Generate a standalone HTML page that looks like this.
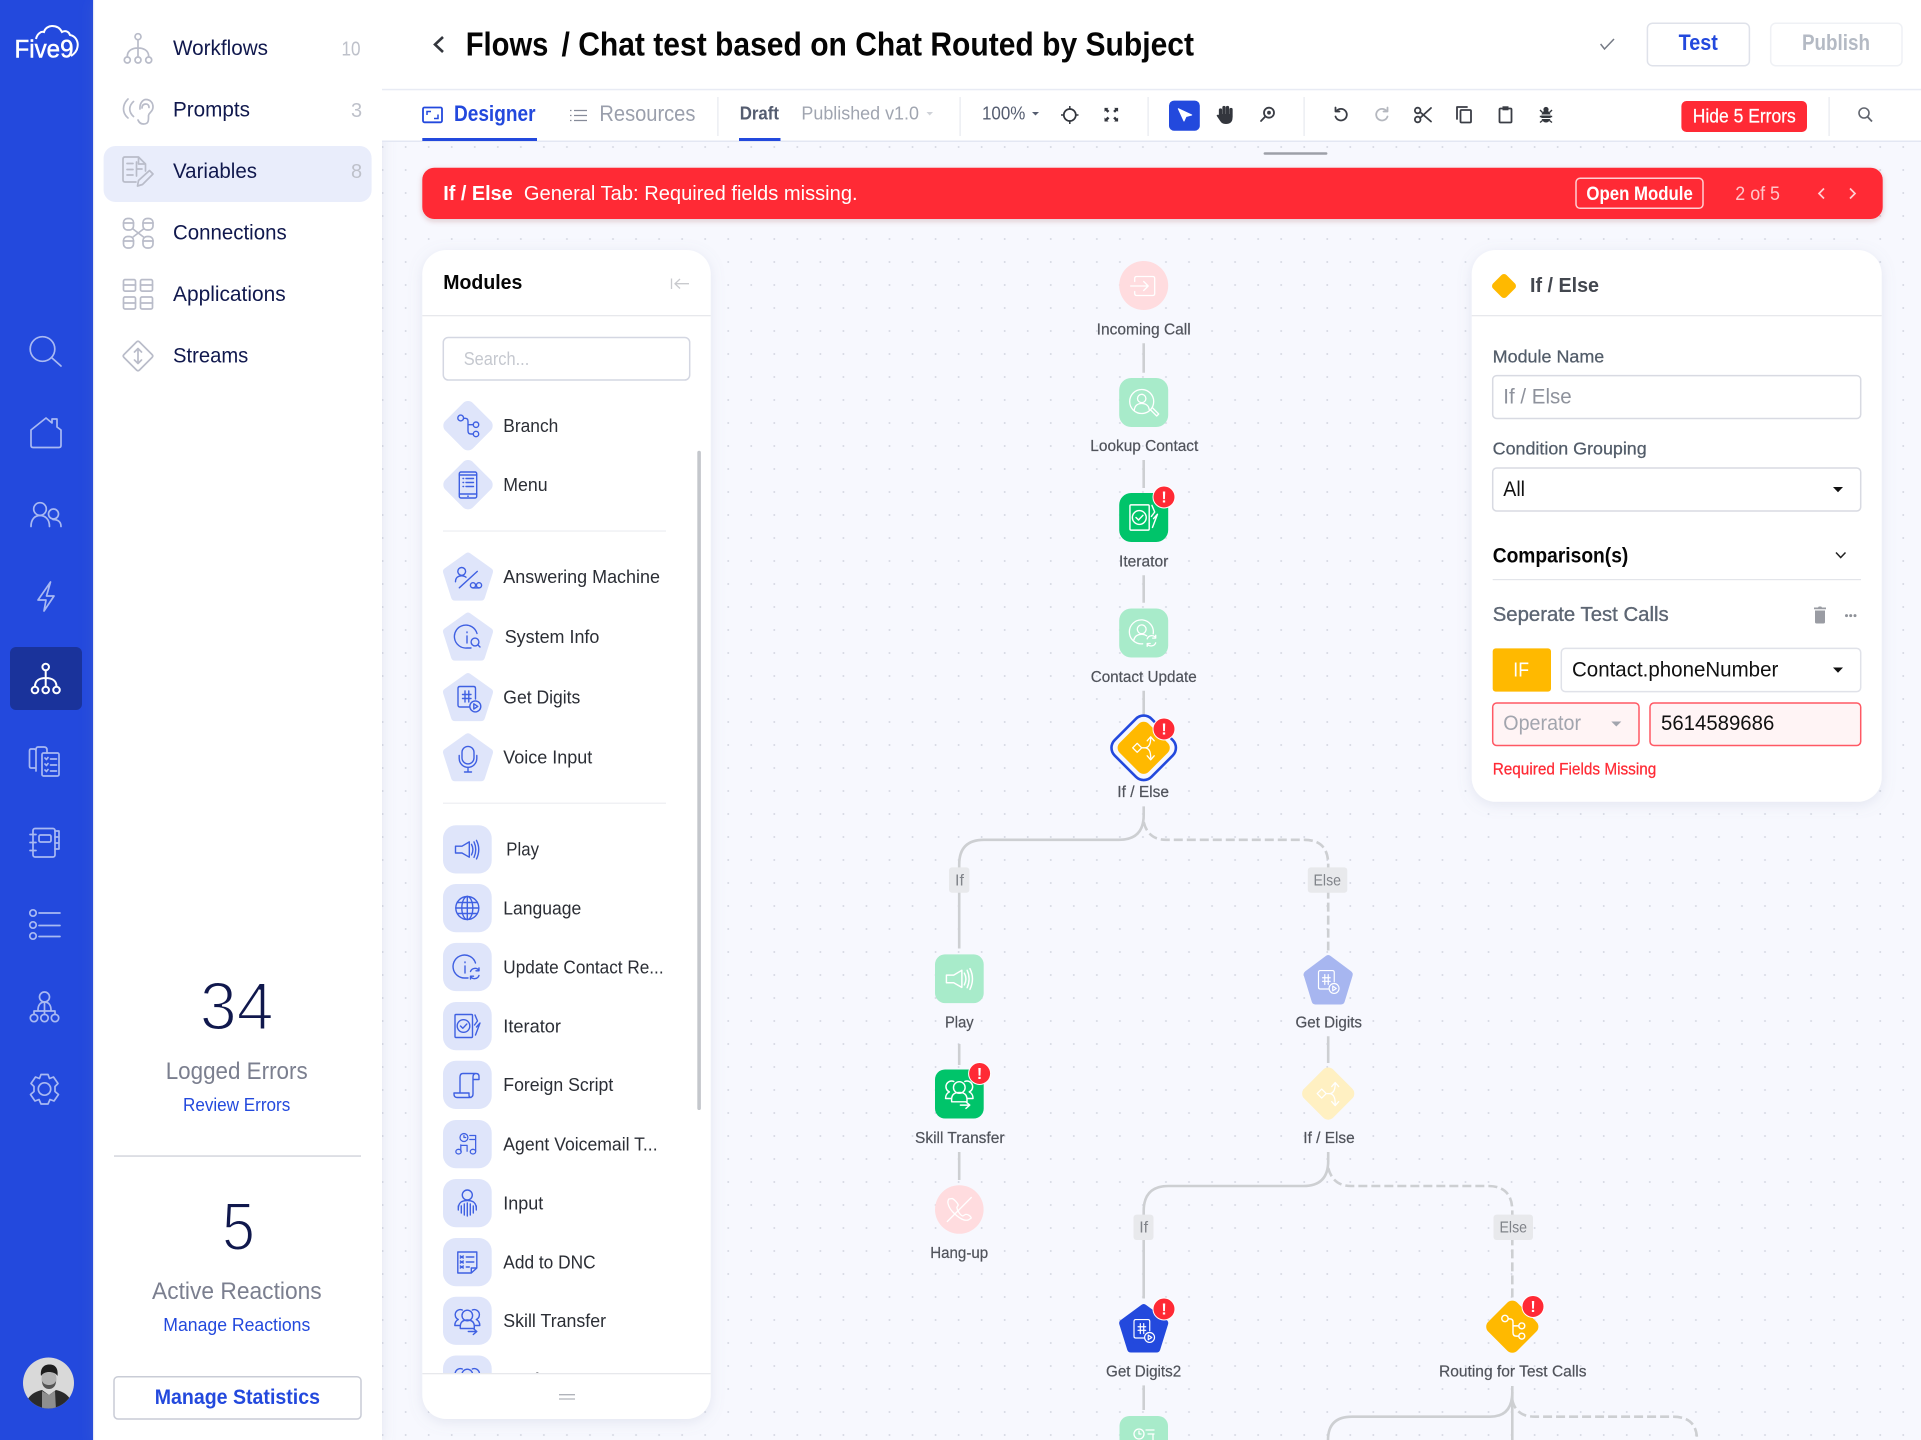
<!DOCTYPE html>
<html lang="en"><head><meta charset="utf-8"><title>Flows / Chat test based on Chat Routed by Subject</title>
<style>
html,body{margin:0;padding:0;background:#fff;width:1921px;height:1440px;overflow:hidden}
svg{display:block}
text{font-family:"Liberation Sans",Arial,sans-serif;white-space:pre}
.b{font-weight:700}
.side{font-size:21px;fill:#10184d}
.cnt{font-size:20px;fill:#bec1ca}
.mod{font-size:18.5px;fill:#2b2e35}
.nl{font-size:15.5px;fill:#50535b;stroke:#50535b;stroke-width:.2px}
.lb{font-size:17.5px;fill:#525c69;stroke:#525c69;stroke-width:.25px}
.tag{font-size:16px;fill:#808389}
.ic{fill:none;stroke:#3f60e2;stroke-width:1.4;stroke-linecap:round;stroke-linejoin:round}
.nw{fill:none;stroke:#fff;stroke-width:1.3;stroke-linecap:round;stroke-linejoin:round}
.rl{fill:none;stroke:#a9b9f2;stroke-width:1.7;stroke-linecap:round;stroke-linejoin:round}
.gy{fill:none;stroke:#b9bcc9;stroke-width:1.7;stroke-linecap:round;stroke-linejoin:round}
.tb{fill:none;stroke:#3a3d45;stroke-width:1.8;stroke-linecap:round;stroke-linejoin:round}
.ln{fill:none;stroke:#cdcfd2;stroke-width:2.6}
.ds{fill:none;stroke:#cdcfd2;stroke-width:2.6;stroke-dasharray:9 4}
.ex{font-size:16px;font-weight:700;fill:#fff;text-anchor:middle}
</style></head><body>
<svg xmlns="http://www.w3.org/2000/svg" width="1921" height="1440" viewBox="0 0 1921 1440">
<defs>
<pattern id="dots" x="371.1" y="135.5" width="23.04" height="23" patternUnits="userSpaceOnUse"><circle cx="11.52" cy="11.5" r="1" fill="#d6d9e3"/></pattern>
<filter id="sh" x="-10%" y="-10%" width="120%" height="120%"><feDropShadow dx="0" dy="3" stdDeviation="7" flood-color="#7f88ad" flood-opacity=".17"/></filter>
<filter id="sh2" x="-5%" y="-30%" width="110%" height="170%"><feDropShadow dx="0" dy="2" stdDeviation="3" flood-color="#7f1f2a" flood-opacity=".22"/></filter>
<clipPath id="listclip"><rect x="422" y="316" width="289" height="1057.5"/></clipPath>
<clipPath id="av"><circle cx="48.5" cy="1383" r="25.5"/></clipPath>
<g id="pent"><polygon points="0,-20 21,-5 13,20 -13,20 -21,-5" stroke-width="8" stroke-linejoin="round"/></g>
<g id="xp"><path d="M-6.800 -6.800H-2.800L-3.900 -5.700L-1.900 -3.700L-3.700 -1.900L-5.700 -3.900L-6.800 -2.800Z"/></g>
<g id="i-branch"><circle cx="-7.3" cy="-7.7" r="2.9"/><circle cx="8" cy="-1" r="2.7"/><circle cx="8" cy="8.3" r="2.7"/><path d="M-4.4 -7.4H-2.5Q0 -7.2 0 -4.5V5Q0 8.3 3 8.3H5.3M0 -1H5.3"/></g>
<g id="i-menu"><rect x="-8.7" y="-13" width="17.4" height="26" rx="1.6"/><path d="M-8.7 -10H8.7M-8.7 9H8.7M-2 -6.5H5.5M-2 -2.5H5.5M-2 1.5H5.5M-5 -6.5H-4.4M-5 -2.5H-4.4M-5 1.5H-4.4M-.3 11.2H.3"/></g>
<g id="i-am"><circle cx="-6.3" cy="-5.4" r="3.9"/><path d="M-12.5 5C-12.5 1-10 -1-6.5 -1C-4.5 -1-3 -.5-2 .5M-8.7 11L9.3 -5.4"/><circle cx="5" cy="8.5" r="2.6"/><circle cx="11" cy="8.5" r="2.6"/><path d="M5 11.1H11"/></g>
<g id="i-sys"><path d="M9 -3.5A11.5 11.5 0 1 0 -1 11H3M-1 -5V-4.3M-1 -1V6"/><circle cx="7" cy="5" r="3.9"/><path d="M10 8L12 10"/></g>
<g id="i-dig"><path d="M7.5 2V-8.5Q7.5 -10.5 5.5 -10.5H-8Q-10 -10.5 -10 -8.5V8Q-10 10 -8 10H1"/><path d="M-5.5 -2.5H3M-5.5 1.5H3M-3 -6V5M.8 -6V5"/><circle cx="7.3" cy="9.4" r="5.5"/><path d="M5.8 6.8L9.8 9.4L5.8 12Z"/></g>
<g id="i-mic"><rect x="-6" y="-10.6" width="12" height="17.5" rx="6"/><path d="M-8.8 -1.5V1.5A8.8 8.8 0 0 0 8.8 1.5V-1.5M0 10.5V15M-3.5 15H3.5"/></g>
<g id="i-play"><path d="M-11.5 -3.2H-5L2.3 -7.5V7.8L-5 3.6H-11.5Z"/><path d="M4.5 -5Q7.3 0 4.5 5.5M7 -7.5Q10.5 0 7 8M9.5 -9Q14 0 9.5 9.5"/></g>
<g id="i-globe"><circle r="11.5"/><ellipse rx="5.5" ry="11.5"/><path d="M0 -11.5V11.5M-11.5 0H11.5M-10 -5.5H10M-10 5.5H10"/></g>
<g id="i-upd"><path d="M8.5 -4A11.5 11.5 0 1 0 -2 11H1M-2 -5V-4.3M-2 -1V6"/><path d="M3.5 4.5A4.8 4.8 0 0 1 12 3.5M12 1V3.8H9M12 8.5A4.8 4.8 0 0 1 3.5 9.5M3.5 12V9.2H6.5"/></g>
<g id="i-iter"><rect x="-12.5" y="-11.5" width="17.5" height="23" rx="1"/><circle cx="-4" cy="0" r="6.3"/><path d="M-7 0L-4.7 2.3L-.7 -2M7.5 -11L10 -5L7 -1M9 1L12.5 -3L8 9"/></g>
<g id="i-script"><path d="M-7 8V-8Q-7 -11.5 -4 -11.5H9M9 -11.5Q6 -11.5 6 -8V9Q6 12.5 2.5 12.5H-10Q-13 12.5 -13 9V8H2V10Q2 12.5 4 12.5M9 -11.5Q12 -11.5 12 -8.5V-5.5H6"/></g>
<g id="i-agent"><circle cx="-4.500" cy="-7.200" r="4.400"/><path d="M-4.500 -9.500V-7.200H-2.500M-8 8V1M8.500 8V-9.500H2M2 -5H8.500M-1 8V1.500H-8"/><ellipse cx="-10.500" cy="8.500" rx="3" ry="2.600"/><ellipse cx="5.500" cy="8.500" rx="3" ry="2.600"/></g>
<g id="i-input"><circle cy="-8" r="5"/><path d="M-9 6C-9 -1-5 -2.5 0 -2.5S9 -1 9 6M-9 3V7M-6 3V10M-3 1V12M0 0V13M3 1V12M6 3V10M9 3V7"/></g>
<g id="i-dnc"><path d="M-9.5 -10H9.5V6L4 11H-9.5ZM9.5 6H4V11"/><path d="M-7 -6L-4 -4M-4 -6L-7 -4M-7 -1L-4 1M-4 -1L-7 1M-7 4L-4 6M-4 4L-7 6M-1 -5H6.5M-1 0H6.5M-1 5H2"/></g>
<g id="i-skill"><circle cy="-5" r="5.3"/><path d="M-7 6C-7 1-4 -.5 0 -.5S7 1 7 6V8H-7ZM-5 -10.5A4.6 4.6 0 0 0 -9 -1C-11 0-12.5 2-12.5 5H-7M5 -10.5A4.6 4.6 0 0 1 9 -1C11 0 12.5 2 12.5 5H7M1 11H9M6 8L9.5 11L6 14"/></g>
<g id="i-ifelse"><path d="M-11 0L-6.5 -4.5L-2 0L-6.5 4.5ZM-2 0H1Q7 0 7 -10M1 0Q7 0 7 10M3.5 -7L7 -11L10.5 -7M3.5 8L7 12L10.5 8"/></g>
<g id="i-enter"><path d="M-9 -4V-7Q-9 -9 -7 -9H9Q11 -9 11 -7V8Q11 10 9 10H-7Q-9 10 -9 8V6M-13 .5H4M0 -4L4.5 .5L0 5"/></g>
<g id="i-look"><circle cx="-2" cy="-1" r="12"/><circle cx="-2" cy="-4" r="4.2"/><path d="M-9.5 8C-9 3-6 1-2 1S5 3 5.5 7M7 7.5L13 13.5L15 11.5L9 5.5"/></g>
<g id="i-cu"><path d="M9.5 1A12 12 0 1 0 -1 11"/><circle cx="-2" cy="-3.5" r="4.4"/><path d="M-10 7.5C-9 3-6 1.5-2 1.5C0 1.5 1.5 2 3 3"/><path d="M3.5 6A4.8 4.8 0 0 1 12 5M12 2.5V5.3H9M12 10A4.8 4.8 0 0 1 3.5 11M3.5 13.5V10.7H6.5"/></g>
<g id="i-hang"><path d="M-10.5 -10.5C-13 -7-10 -1-6 3C-2 7 4 12 9 10.5L12 8.5C11 6 8 4.5 6 5L3.5 6.5C1 6-2 1-2.5 -2L-1 -4.5C-2 -7-5 -10-7 -11ZM-12 12L12 -12"/></g>
</defs>

<!-- canvas -->
<rect x="382" y="142" width="1539" height="1298" fill="#f7f8fe"/>
<rect x="382" y="142" width="1539" height="1298" fill="url(#dots)"/>

<!-- left rail -->
<rect width="93" height="1440" fill="#2349dd"/>
<rect x="93" width="289" height="1440" fill="#fff" filter="url(#sh)"/>
<rect x="93" width="1.2" height="1440" fill="#e6e9f5"/>
<path d="M36 39C37 34 41 31 44 32C45 28 49 26 52 26C57 26 60 28 62 32C66 30 69 32 70 35C76 36 78.500 42 77.500 47C77 51 74 54 71 56" fill="none" stroke="#fff" stroke-width="2"/>
<text x="14.500" y="57.300" font-size="25" fill="#fff" stroke="#fff" stroke-width=".5" textLength="59" lengthAdjust="spacingAndGlyphs">Five9</text>
<g class="rl">
<circle cx="42.500" cy="349" r="12.300"/><path d="M51.500 357.500L61 366"/>
<path d="M31 445.500V430L46 418L52 423V419H57V427L61 430V445.500Q61 447.500 59 447.500H33Q31 447.500 31 445.500Z"/>
<circle cx="40" cy="509" r="6.300"/><path d="M31 526.500C31 519 35 515.500 40 515.500S49.500 519 49.500 526.500"/><circle cx="53.500" cy="514" r="5"/><path d="M53 519.500C58 519.500 61 522 61 526.500"/>
<path d="M50.500 582L38 600H46L44 611L54 596H46.500Z"/>
<path d="M36 771V751Q36 749 34 749H31Q29.500 749 29.500 751V766Q29.500 768 31 768H36M36 755V750Q36 747 38 747H44Q47 747 47 750V753"/><rect x="42" y="753" width="17" height="23" rx="1.500"/><path d="M45 758L46.500 759.500L48 757.500M50.500 759H56.500M45 764L46.500 765.500L48 763.500M50.500 765H56.500M45 770L46.500 771.500L48 769.500M50.500 771H56.500"/>
<rect x="33" y="828.500" width="22" height="28.500" rx="2"/><rect x="39" y="835" width="12" height="7" rx="1.500"/><path d="M30 834.500H36M30 842.500H36M30 850.500H36M55 831H59V849H55M55 837H59M55 843H59"/>
<circle cx="33" cy="913" r="3.200"/><circle cx="33" cy="925" r="3.200"/><circle cx="33" cy="936" r="3.200"/><path d="M39 913H60M39 925.500H60M39 936.500H60"/>
<circle cx="44.500" cy="997" r="5"/><path d="M38 1010C38 1005 40.500 1002 44.500 1002S51 1005 51 1010M44.500 1002V1014.500M34 1014.500V1011H55V1014.500"/><circle cx="34" cy="1018" r="3.700"/><circle cx="44.500" cy="1018" r="3.700"/><circle cx="55" cy="1018" r="3.700"/>
<circle cx="44.500" cy="1089" r="6.200"/><path d="M41 1074.500H48L49.500 1078.500L53.500 1077L58 1083.500L55 1086.500V1091.500L58.500 1094.500L54 1101L50 1099.500L48 1104H41L39 1099.500L35 1101L30.500 1094.500L34 1091.500V1086.500L31 1083.500L35.500 1077L39.500 1078.500Z"/>
</g>
<rect x="10" y="647" width="72" height="63" rx="6" fill="#1a339b"/>
<g fill="none" stroke="#fff" stroke-width="2" stroke-linecap="round"><circle cx="45.700" cy="667" r="3.300"/><path d="M45.700 670.500V686.500M35 686.500C35 681 39 678 45.700 678S56.500 681 56.500 686.500"/><circle cx="35" cy="690" r="3.300"/><circle cx="45.700" cy="690" r="3.300"/><circle cx="56.500" cy="690" r="3.300"/></g>
<g clip-path="url(#av)"><rect x="20" y="1355" width="58" height="56" fill="#d9d9d9"/><path d="M24 1410C26 1397 33 1392 42 1390L49 1395L56 1390C65 1392 72 1397 74 1410Z" fill="#2b2b2b"/><path d="M42 1391L49 1395L55 1391L56 1410H42Z" fill="#8e8e8e"/><ellipse cx="49" cy="1379" rx="7.500" ry="9.500" fill="#b3b3b3"/><path d="M41 1376C40 1368 44 1364.500 49.500 1364.500S58.500 1368 57.500 1376C56 1373 52 1372 49 1372S43 1373 41 1376Z" fill="#1e1e1e"/><path d="M42 1381C43.500 1384 46 1385 49 1385S54.500 1384 56 1381C56 1386 53 1389 49 1389S42 1386 42 1381Z" fill="#555"/></g>

<!-- side list -->
<rect x="103.600" y="146" width="268" height="56" rx="12" fill="#e9edfb"/>
<g class="gy">
<circle cx="138" cy="36.700" r="3"/><path d="M138 40V56.500M127.300 56.500C127.300 50 133 48 138 48S148.700 50 148.700 56.500"/><circle cx="127.300" cy="60" r="3"/><circle cx="138" cy="60" r="3"/><circle cx="148.700" cy="60" r="3"/>
<path d="M140 109C139.500 103 143 99.500 146 99.500C150 99.500 153 102.500 153 107C153 112 149 112 148.500 115.500C148.500 120 149 124 143.500 124C141 124 139 122.500 138 120M128 99C122 105 122 113 128 118M133.500 101.500C128.500 106 128.500 112 133.500 116.500M142 108C142 104.500 144.500 104 146 104C148 104 149 105.500 149 107.500"/>
<path d="M145.500 171V164L138.500 157H125Q123 157 123 159V180Q123 182 125 182H136M138.500 157V164H145.500M127 163.500H133M127 169.500H133M127 175H133M136.500 162V176M136.500 169H142"/><path d="M137.500 186L138.500 180.500L149.500 170.500L153 174L142.500 184.500Z"/>
<rect x="123.500" y="218.500" width="10" height="11.500" rx="4"/><path d="M123.500 223H133.500"/><rect x="143" y="218.500" width="10" height="11.500" rx="4"/><path d="M143 223H153"/><rect x="123.500" y="236.500" width="10" height="11.500" rx="4"/><path d="M123.500 241H133.500"/><rect x="143" y="236.500" width="10" height="11.500" rx="4"/><path d="M143 241H153M133 229L143.500 237M143.500 229L133 237"/>
<rect x="123.500" y="279.600" width="12" height="11.500" rx="1.500"/><rect x="140.500" y="279.600" width="12" height="11.500" rx="1.500"/><rect x="123.500" y="297" width="12" height="12" rx="1.500"/><rect x="140.500" y="297" width="12" height="12" rx="1.500"/><path d="M123.500 285H135.500M140.500 285H152.500M123.500 303H135.500M140.500 303H152.500"/>
<path d="M136.500 342Q138 340.500 139.500 342L152 354.500Q153.500 356 152 357.500L139.500 370Q138 371.500 136.500 370L124 357.500Q122.500 356 124 354.500ZM138 349V363M134.500 352L138 348.500L141.500 352M134.500 360L138 363.500L141.500 360"/>
</g>
<text x="173" y="55" class="side" textLength="95" lengthAdjust="spacingAndGlyphs">Workflows</text>
<text x="173" y="116.500" class="side" textLength="77" lengthAdjust="spacingAndGlyphs">Prompts</text>
<text x="173" y="178" class="side" textLength="84" lengthAdjust="spacingAndGlyphs">Variables</text>
<text x="173" y="239.500" class="side" textLength="113.700" lengthAdjust="spacingAndGlyphs">Connections</text>
<text x="173" y="301" class="side" textLength="112.700" lengthAdjust="spacingAndGlyphs">Applications</text>
<text x="173" y="362.500" class="side" textLength="75.300" lengthAdjust="spacingAndGlyphs">Streams</text>
<text x="341.500" y="55.500" class="cnt" textLength="19" lengthAdjust="spacingAndGlyphs">10</text>
<text x="351" y="117" class="cnt">3</text>
<text x="351" y="178" class="cnt">8</text>

<text x="199.700" y="1029.500" font-size="68" fill="#10184d" stroke="#fff" stroke-width="2" textLength="74" lengthAdjust="spacingAndGlyphs">34</text>
<text x="165.700" y="1079" font-size="24" fill="#7b7f8f" textLength="142" lengthAdjust="spacingAndGlyphs">Logged Errors</text>
<text x="183" y="1111" font-size="18" fill="#2349dd" textLength="107.300" lengthAdjust="spacingAndGlyphs">Review Errors</text>
<rect x="114" y="1155.300" width="247" height="1.500" fill="#d4d6dd"/>
<text x="222" y="1250" font-size="68" fill="#10184d" stroke="#fff" stroke-width="2" textLength="33" lengthAdjust="spacingAndGlyphs">5</text>
<text x="152" y="1299" font-size="24" fill="#7b7f8f" textLength="169.700" lengthAdjust="spacingAndGlyphs">Active Reactions</text>
<text x="163.300" y="1331" font-size="18" fill="#2349dd" textLength="147" lengthAdjust="spacingAndGlyphs">Manage Reactions</text>
<rect x="114" y="1376.700" width="247" height="42.300" rx="4" fill="#fff" stroke="#c9ccd6" stroke-width="1.500"/>
<text x="154.700" y="1404" font-size="21" fill="#2349dd" class="b" textLength="165.300" lengthAdjust="spacingAndGlyphs">Manage Statistics</text>

<!-- header -->
<rect x="382" width="1539" height="141" fill="#fff"/>
<rect x="382" y="88.800" width="1539" height="1.500" fill="#e8ebf4"/>
<rect x="382" y="140.500" width="1539" height="1.500" fill="#e3e7f3"/>
<path d="M443 37L435 44.500L443 52" fill="none" stroke="#33363d" stroke-width="2.600"/>
<text x="465.700" y="55.500" font-size="33" fill="#050505" class="b" textLength="82.700" lengthAdjust="spacingAndGlyphs">Flows</text>
<text x="561.500" y="55.500" font-size="33" fill="#050505" class="b" textLength="632.500" lengthAdjust="spacingAndGlyphs">/ Chat test based on Chat Routed by Subject</text>
<path d="M1600.600 44L1604.500 49L1614 39" fill="none" stroke="#757a85" stroke-width="1.500"/>
<rect x="1647.400" y="23.300" width="102" height="42.400" rx="5" fill="#fff" stroke="#dfe2ea" stroke-width="1.500"/>
<text x="1678.600" y="50" font-size="22" fill="#2349dd" class="b" textLength="39.200" lengthAdjust="spacingAndGlyphs">Test</text>
<rect x="1770.700" y="23.300" width="131.300" height="42.400" rx="5" fill="#fff" stroke="#eff1f5" stroke-width="1.500"/>
<text x="1802" y="50" font-size="22" fill="#b4bac4" class="b" textLength="68" lengthAdjust="spacingAndGlyphs">Publish</text>

<!-- tabs -->
<rect x="423" y="107.500" width="19" height="14.800" rx="1.500" fill="none" stroke="#2349dd" stroke-width="1.800"/>
<path d="M427 115V111.500H431M438 114.500V118.500H434" fill="none" stroke="#2349dd" stroke-width="1.500"/>
<text x="454" y="121" font-size="22" fill="#2349dd" class="b" textLength="81.500" lengthAdjust="spacingAndGlyphs">Designer</text>
<rect x="422.300" y="138" width="114.700" height="3" fill="#2349dd"/>
<path d="M574 110.500H587M574 115.500H587M574 120.500H587M570 110.500H571.500M570 115.500H571.500M570 120.500H571.500" stroke="#868b99" stroke-width="1.300" fill="none"/>
<text x="599.400" y="121" font-size="22" fill="#9a9fac" textLength="96" lengthAdjust="spacingAndGlyphs">Resources</text>
<g fill="#e7e9ef"><rect x="717.300" y="97" width="1.200" height="39"/><rect x="959.500" y="97" width="1.200" height="39"/><rect x="1147.500" y="97" width="1.200" height="39"/><rect x="1303.500" y="97" width="1.200" height="39"/><rect x="1828.500" y="97" width="1.200" height="39"/></g>
<text x="739.700" y="119.500" font-size="18.500" fill="#555d70" class="b" textLength="39.300" lengthAdjust="spacingAndGlyphs">Draft</text>
<rect x="739" y="138" width="41.500" height="3" fill="#2349dd"/>
<text x="801.400" y="119.500" font-size="18.500" fill="#a0a5b0" textLength="117.600" lengthAdjust="spacingAndGlyphs">Published v1.0</text>
<path d="M926.500 112H933L929.700 115.500Z" fill="#cfd2d8"/>
<text x="982" y="119.500" font-size="18.500" fill="#555d70" textLength="43.400" lengthAdjust="spacingAndGlyphs">100%</text>
<path d="M1032 112H1039L1035.500 115.500Z" fill="#555d70"/>
<g fill="none" stroke="#33363d" stroke-width="1.700"><circle cx="1069.800" cy="115" r="6"/><path d="M1069.800 106V109M1069.800 121V124M1061 115H1064M1075.500 115H1078.500" stroke-width="1.500"/></g>
<g fill="#33363d"><use href="#xp" transform="translate(1111.300 114.700)"/><use href="#xp" transform="translate(1111.300 114.700) scale(-1 1)"/><use href="#xp" transform="translate(1111.300 114.700) scale(1 -1)"/><use href="#xp" transform="translate(1111.300 114.700) scale(-1 -1)"/></g>
<rect x="1169" y="100.600" width="30.800" height="30.100" rx="5" fill="#2349dd"/>
<path d="M1178.300 108.700L1191.700 115L1186 116.500L1184 121Z" fill="#fff" stroke="#fff" stroke-width="1" stroke-linejoin="round"/>
<g stroke="#33363d" fill="none" stroke-linecap="round"><path d="M1220.500 110V118M1224 107.500V116M1227.500 107.500V116M1231 109.500V117" stroke-width="3.300"/></g>
<path d="M1219 114H1232.500V118C1232.500 122 1230 124 1226 124C1222.500 124 1221 122.500 1219.500 120L1216.500 115.500L1218 114.500L1220 116Z" fill="#33363d"/>
<g class="tb" stroke-width="1.400"><circle cx="1269" cy="112.700" r="5"/><path d="M1265.300 116.500L1261 121"/><circle cx="1269" cy="112.700" r="1" fill="#3a3d45"/></g>
<g class="tb"><path d="M1336.500 111A5.800 5.800 0 1 1 1335.500 116.500M1335.500 107.500V111.500H1339.500"/></g>
<g class="tb" style="stroke:#b5b8bf"><path d="M1386.500 111A5.800 5.800 0 1 0 1387.500 116.500M1387.500 107.500V111.500H1383.500"/></g>
<g class="tb"><circle cx="1417.700" cy="110.500" r="2.800"/><circle cx="1417.700" cy="119.500" r="2.800"/><path d="M1420 112L1431 121.500M1420 118L1431 108"/><path d="M1457 119V107H1467"/><rect x="1460.500" y="110" width="10.500" height="12.500" rx="1"/><rect x="1499.500" y="108.500" width="12" height="14" rx="1"/></g>
<rect x="1502.500" y="106.300" width="6" height="4" fill="#3a3d45"/>
<g fill="#33363d"><ellipse cx="1546" cy="116.500" rx="4.800" ry="6"/><circle cx="1546" cy="109.500" r="2.600"/></g>
<path d="M1540 110L1542.500 112.500M1552 110L1549.500 112.500M1539.800 116.500H1552.200M1540 122.500L1542.500 120.500M1552 122.500L1549.500 120.500" stroke="#33363d" stroke-width="1.400" fill="none"/>
<path d="M1541.500 115H1550.500M1541.500 118.500H1550.500" stroke="#fff" stroke-width=".9"/>
<rect x="1681.400" y="101" width="125.600" height="31" rx="5" fill="#ff2a35"/>
<text x="1692.800" y="122.700" font-size="19" fill="#fff" stroke="#fff" stroke-width=".25" textLength="103" lengthAdjust="spacingAndGlyphs">Hide 5 Errors</text>
<circle cx="1864" cy="113" r="5" fill="none" stroke="#62666f" stroke-width="1.600"/><path d="M1867.500 116.700L1872 121.500" stroke="#62666f" stroke-width="1.800"/>

<rect x="1263.600" y="152.300" width="63.800" height="2.500" rx="1.200" fill="#9da0a8"/>

<!-- error banner -->
<rect x="422.300" y="167.700" width="1460.400" height="51.300" rx="12" fill="#ff2a35" filter="url(#sh2)"/>
<text x="443.300" y="200" font-size="20.500" fill="#fff" class="b" textLength="69.300" lengthAdjust="spacingAndGlyphs">If / Else</text>
<text x="523.900" y="200" font-size="20.500" fill="#fff" textLength="333.700" lengthAdjust="spacingAndGlyphs">General Tab: Required fields missing.</text>
<rect x="1576" y="178.300" width="127" height="30" rx="4" fill="none" stroke="#ffd0d3" stroke-width="1.500"/>
<text x="1586.400" y="200" font-size="19.500" fill="#fff" class="b" textLength="106.400" lengthAdjust="spacingAndGlyphs">Open Module</text>
<text x="1735.300" y="200" font-size="19.500" fill="#ffc6ca" textLength="44.700" lengthAdjust="spacingAndGlyphs">2 of 5</text>
<path d="M1824 188.500L1819 193.500L1824 198.500M1850 188.500L1855 193.500L1850 198.500" fill="none" stroke="#ffd0d3" stroke-width="1.700"/>

<!-- flow connectors -->
<g class="ln">
<path d="M1143.700 343.300V372.800M1143.700 460V488M1143.700 575.200V602.800M1143.700 690.800V716"/>
<path d="M1143.700 806.400V815Q1143.700 839.800 1119 839.800H984Q959.200 839.800 959.200 864.500V948.500"/>
<path d="M959.200 1044V1065M959.200 1152V1180M1328.200 1036.300V1063"/>
<path d="M1328.200 1152V1161Q1328.200 1186 1303.500 1186H1168.500Q1143.700 1186 1143.700 1211V1298.500"/>
<path d="M1143.700 1385.400V1410"/>
<path d="M1512.300 1386V1440"/>
<path d="M1512.300 1392Q1512.300 1416.700 1490 1416.700H1352Q1328 1416.700 1328 1440"/>
</g>
<g class="ds">
<path d="M1143.700 822Q1148 839.800 1166 839.800H1304Q1328.200 839.800 1328.200 864.500V950.500"/>
<path d="M1328.200 1168Q1333 1186 1351 1186H1488Q1512.300 1186 1512.300 1211V1298.500"/>
<path d="M1512.300 1400Q1516 1416.700 1535 1416.700H1673Q1697 1416.700 1697 1440"/>
</g>
<g>
<rect x="949" y="867.400" width="20.400" height="25.400" rx="3" fill="#e8e9ec"/><text x="955" y="885.500" class="tag">If</text>
<rect x="1307.800" y="867.400" width="39.500" height="25.400" rx="3" fill="#e8e9ec"/><text x="1313.500" y="885.500" class="tag" textLength="27.500" lengthAdjust="spacingAndGlyphs">Else</text>
<rect x="1133.500" y="1214.600" width="20" height="25.400" rx="3" fill="#e8e9ec"/><text x="1139.200" y="1232.700" class="tag">If</text>
<rect x="1493.500" y="1214.600" width="39.500" height="25.400" rx="3" fill="#e8e9ec"/><text x="1499.500" y="1232.700" class="tag" textLength="27.500" lengthAdjust="spacingAndGlyphs">Else</text>
</g>

<!-- nodes -->
<circle cx="1143.700" cy="285.500" r="24.500" fill="#ffdcdf"/><use href="#i-enter" class="nw" transform="translate(1143.700 285.500)"/>
<text x="1096.700" y="334.500" class="nl" textLength="94" lengthAdjust="spacingAndGlyphs">Incoming Call</text>
<rect x="1119.200" y="378" width="49" height="49" rx="12" fill="#a8ebca"/><use href="#i-look" class="nw" transform="translate(1143.700 402.500)"/>
<text x="1090.300" y="451" class="nl" textLength="108" lengthAdjust="spacingAndGlyphs">Lookup Contact</text>
<rect x="1119.200" y="493" width="49" height="49" rx="12" fill="#00c46a"/><use href="#i-iter" class="nw" transform="translate(1143.700 517.500) scale(1.100)"/>
<text x="1119" y="566.400" class="nl" textLength="49.300" lengthAdjust="spacingAndGlyphs">Iterator</text>
<rect x="1119.200" y="608.500" width="49" height="49" rx="12" fill="#a8ebca"/><use href="#i-cu" class="nw" transform="translate(1143.700 632.800)"/>
<text x="1090.700" y="682" class="nl" textLength="106" lengthAdjust="spacingAndGlyphs">Contact Update</text>
<rect x="-26" y="-26" width="52" height="52" rx="11" fill="#f7f8fe" stroke="#2349dd" stroke-width="2.600" transform="translate(1143.700 747.800) rotate(45)"/>
<rect x="-20.500" y="-20.500" width="41" height="41" rx="7" fill="#ffb900" transform="translate(1143.700 747.800) rotate(45)"/><use href="#i-ifelse" class="nw" transform="translate(1143.700 747.800)"/>
<text x="1117.300" y="797.200" class="nl" textLength="51.700" lengthAdjust="spacingAndGlyphs">If / Else</text>

<rect x="935" y="954.400" width="48.700" height="48.700" rx="10" fill="#a8ebca"/><use href="#i-play" class="nw" transform="translate(959.300 978.700) scale(1.120)"/>
<text x="945" y="1027.600" class="nl" textLength="28.600" lengthAdjust="spacingAndGlyphs">Play</text>
<rect x="935" y="1069.500" width="48.700" height="49" rx="10" fill="#00c46a"/><use href="#i-skill" class="nw" transform="translate(959.300 1093) scale(1.100)"/>
<text x="915" y="1143" class="nl" textLength="89.500" lengthAdjust="spacingAndGlyphs">Skill Transfer</text>
<circle cx="959.300" cy="1209.500" r="24.300" fill="#ffdcdf"/><use href="#i-hang" class="nw" transform="translate(959.300 1209.500)"/>
<text x="930.200" y="1258" class="nl" textLength="58" lengthAdjust="spacingAndGlyphs">Hang-up</text>

<use href="#pent" fill="#a7b6f0" stroke="#a7b6f0" transform="translate(1328.200 979.800) scale(.98 1.030)"/><use href="#i-dig" class="nw" transform="translate(1327.500 980) scale(.9)"/>
<text x="1295.500" y="1027.600" class="nl" textLength="66.500" lengthAdjust="spacingAndGlyphs">Get Digits</text>
<rect x="-20.500" y="-20.500" width="41" height="41" rx="7" fill="#fff0c2" transform="translate(1328.200 1093.600) rotate(45)"/><use href="#i-ifelse" class="nw" transform="translate(1328.200 1093.600)"/>
<text x="1303.300" y="1143" class="nl" textLength="51.400" lengthAdjust="spacingAndGlyphs">If / Else</text>

<use href="#pent" fill="#2349dd" stroke="#2349dd" transform="translate(1143.700 1328.300) scale(.98 1.010)"/><use href="#i-dig" class="nw" transform="translate(1143 1329) scale(.9)"/>
<text x="1106" y="1376.700" class="nl" textLength="75.200" lengthAdjust="spacingAndGlyphs">Get Digits2</text>
<rect x="1119.500" y="1416" width="48.500" height="50" rx="10" fill="#a8ebca"/>
<g class="nw"><circle cx="1139" cy="1434" r="5"/><path d="M1139 1431V1434H1141M1146 1430H1154M1148 1434H1154M1153 1434V1440"/></g>

<rect x="-20.500" y="-20.500" width="41" height="41" rx="7" fill="#ffb900" transform="translate(1512.300 1326.700) rotate(45)"/><use href="#i-branch" class="nw" transform="translate(1513 1327) scale(1.100)"/>
<text x="1439" y="1376.500" class="nl" textLength="147.500" lengthAdjust="spacingAndGlyphs">Routing for Test Calls</text>

<!-- badges -->
<g fill="#ff2a35" stroke="#fff" stroke-width="1"><circle cx="1164" cy="497" r="11"/><circle cx="1164" cy="729" r="11"/><circle cx="979.600" cy="1073.500" r="11"/><circle cx="1164" cy="1309" r="11"/><circle cx="1533" cy="1306.500" r="11"/></g>
<text x="1164" y="502.500" class="ex">!</text><text x="1164" y="734.500" class="ex">!</text><text x="979.600" y="1079" class="ex">!</text><text x="1164" y="1314.500" class="ex">!</text><text x="1533" y="1312" class="ex">!</text>

<!-- modules panel -->
<rect x="422.300" y="250" width="288.400" height="1169" rx="24" fill="#fff" filter="url(#sh)"/>
<text x="443.300" y="289" font-size="20.500" fill="#050505" class="b" textLength="79" lengthAdjust="spacingAndGlyphs">Modules</text>
<path d="M671.500 278.500V289M675 283.700H689M680 279L675 283.700L680 288.500" fill="none" stroke="#c9cace" stroke-width="1.300"/>
<rect x="422.300" y="315" width="288.400" height="1.300" fill="#e7e8ec"/>
<rect x="443.300" y="337.500" width="246.400" height="42.500" rx="5" fill="#fff" stroke="#d4d7e2" stroke-width="1.500"/>
<text x="463.700" y="365" font-size="18" fill="#c5c8cf" textLength="65.600" lengthAdjust="spacingAndGlyphs">Search...</text>
<rect x="697.300" y="450.700" width="3.600" height="659.300" rx="1.800" fill="#c4c7cc"/>
<g clip-path="url(#listclip)">
<rect x="-19.500" y="-19.500" width="39" height="39" rx="7" fill="#dfe5fa" transform="translate(468 425.700) rotate(45)"/>
<rect x="-19.500" y="-19.500" width="39" height="39" rx="7" fill="#dfe5fa" transform="translate(468 484.700) rotate(45)"/>
<rect x="443" y="530.300" width="223" height="1.500" fill="#f0f1f4"/>
<g fill="#dfe5fa" stroke="#dfe5fa"><use href="#pent" transform="translate(468 576.600)"/><use href="#pent" transform="translate(468 636.600)"/><use href="#pent" transform="translate(468 697.100)"/><use href="#pent" transform="translate(468 757.300)"/></g>
<rect x="443" y="802.500" width="223" height="1.500" fill="#f0f1f4"/>
<g fill="#dfe5fa"><rect x="443" y="825.300" width="48.700" height="48.200" rx="13"/><rect x="443" y="884" width="48.700" height="48.200" rx="13"/><rect x="443" y="942.900" width="48.700" height="48.200" rx="13"/><rect x="443" y="1002" width="48.700" height="48.200" rx="13"/><rect x="443" y="1060.800" width="48.700" height="48.200" rx="13"/><rect x="443" y="1120" width="48.700" height="48.200" rx="13"/><rect x="443" y="1179" width="48.700" height="48.200" rx="13"/><rect x="443" y="1238" width="48.700" height="48.200" rx="13"/><rect x="443" y="1296.700" width="48.700" height="48.200" rx="13"/><rect x="443" y="1355.500" width="48.700" height="48.200" rx="13"/></g>
<g class="ic">
<use href="#i-branch" transform="translate(468 425.700)"/><use href="#i-menu" transform="translate(468 485)"/><use href="#i-am" transform="translate(468 576.800)"/><use href="#i-sys" transform="translate(468 637)"/><use href="#i-dig" transform="translate(468 697)"/><use href="#i-mic" transform="translate(468 757)"/>
<use href="#i-play" transform="translate(467 849.400)"/><use href="#i-globe" transform="translate(467.300 908)"/><use href="#i-upd" transform="translate(467 967)"/><use href="#i-iter" transform="translate(467.500 1026)"/><use href="#i-script" transform="translate(467 1085)"/><use href="#i-agent" transform="translate(468 1144) scale(.9)"/><use href="#i-input" transform="translate(467.300 1203)"/><use href="#i-dnc" transform="translate(467.300 1262)"/><use href="#i-skill" transform="translate(467.300 1320.500)"/><use href="#i-skill" transform="translate(467.300 1379.500)"/>
</g>
<text x="503.300" y="432" class="mod" textLength="55" lengthAdjust="spacingAndGlyphs">Branch</text>
<text x="503.300" y="491" class="mod" textLength="44.300" lengthAdjust="spacingAndGlyphs">Menu</text>
<text x="503.300" y="583" class="mod" textLength="156.700" lengthAdjust="spacingAndGlyphs">Answering Machine</text>
<text x="504.700" y="643" class="mod" textLength="94.700" lengthAdjust="spacingAndGlyphs">System Info</text>
<text x="503.300" y="703.500" class="mod" textLength="77" lengthAdjust="spacingAndGlyphs">Get Digits</text>
<text x="503.300" y="763.500" class="mod" textLength="89" lengthAdjust="spacingAndGlyphs">Voice Input</text>
<text x="506.300" y="855.500" class="mod" textLength="32.700" lengthAdjust="spacingAndGlyphs">Play</text>
<text x="503.300" y="914.300" class="mod" textLength="78" lengthAdjust="spacingAndGlyphs">Language</text>
<text x="503.300" y="973.300" class="mod" textLength="160.300" lengthAdjust="spacingAndGlyphs">Update Contact Re...</text>
<text x="503.300" y="1032.400" class="mod" textLength="57.700" lengthAdjust="spacingAndGlyphs">Iterator</text>
<text x="503.300" y="1091.200" class="mod" textLength="110" lengthAdjust="spacingAndGlyphs">Foreign Script</text>
<text x="503.300" y="1150.400" class="mod" textLength="154.300" lengthAdjust="spacingAndGlyphs">Agent Voicemail T...</text>
<text x="503.300" y="1209.300" class="mod" textLength="40" lengthAdjust="spacingAndGlyphs">Input</text>
<text x="503.300" y="1268.300" class="mod" textLength="92.300" lengthAdjust="spacingAndGlyphs">Add to DNC</text>
<text x="503.300" y="1327" class="mod" textLength="102.700" lengthAdjust="spacingAndGlyphs">Skill Transfer</text>
<text x="503.300" y="1385.800" class="mod" textLength="86" lengthAdjust="spacingAndGlyphs">Conference</text>
</g>
<rect x="422.300" y="1373" width="288.400" height="1.300" fill="#e7e8ec"/>
<path d="M559 1394.700H575M559 1399H575" stroke="#b0b3ba" stroke-width="1.300" fill="none"/>

<!-- inspector -->
<rect x="1471.700" y="250" width="410" height="551.800" rx="24" fill="#fff" filter="url(#sh)"/>
<rect x="-9.500" y="-9.500" width="19" height="19" rx="3.500" fill="#ffb900" transform="translate(1504 286) rotate(45)"/>
<text x="1530" y="292" font-size="20.500" fill="#43474f" class="b" textLength="69" lengthAdjust="spacingAndGlyphs">If / Else</text>
<rect x="1471.700" y="315" width="410" height="1.300" fill="#e7e8ec"/>
<text x="1492.700" y="362.500" class="lb" textLength="111.600" lengthAdjust="spacingAndGlyphs">Module Name</text>
<rect x="1492.700" y="375.600" width="368" height="42.900" rx="4" fill="#fff" stroke="#d8dae2" stroke-width="1.500"/>
<text x="1503.300" y="403.400" font-size="21" fill="#8e929c" textLength="68.400" lengthAdjust="spacingAndGlyphs">If / Else</text>
<text x="1492.700" y="454.300" class="lb" textLength="154" lengthAdjust="spacingAndGlyphs">Condition Grouping</text>
<rect x="1492.700" y="468" width="368" height="43" rx="4" fill="#fff" stroke="#d8dae2" stroke-width="1.500"/>
<text x="1503.300" y="496" font-size="21" fill="#111" textLength="21.700" lengthAdjust="spacingAndGlyphs">All</text>
<path d="M1833 487H1843L1838 492.300Z" fill="#111"/>
<text x="1492.700" y="562.500" font-size="21" fill="#050505" class="b" textLength="135.600" lengthAdjust="spacingAndGlyphs">Comparison(s)</text>
<path d="M1836 552.500L1840.700 557.500L1845.500 552.500" fill="none" stroke="#222" stroke-width="1.500"/>
<rect x="1492.700" y="579" width="368.300" height="1.200" fill="#e3e5ea"/>
<text x="1492.700" y="621" font-size="20.500" fill="#5d6673" stroke="#5d6673" stroke-width=".35" textLength="176" lengthAdjust="spacingAndGlyphs">Seperate Test Calls</text>
<path d="M1815 610.500H1825V622Q1825 623.500 1823.500 623.500H1816.500Q1815 623.500 1815 622ZM1814 607.500H1818L1818.800 606.500H1821.200L1822 607.500H1826V609.300H1814Z" fill="#9a9ca3"/>
<g fill="#8e9198"><circle cx="1846.500" cy="615.600" r="1.500"/><circle cx="1850.700" cy="615.600" r="1.500"/><circle cx="1855" cy="615.600" r="1.500"/></g>
<rect x="1492.700" y="648.400" width="58.300" height="43.200" rx="3" fill="#ffb900"/>
<text x="1513.300" y="676.400" font-size="20" fill="#fff" textLength="15.700" lengthAdjust="spacingAndGlyphs">IF</text>
<rect x="1561.300" y="648.400" width="299.400" height="43.200" rx="4" fill="#fff" stroke="#e0e2e9" stroke-width="1.500"/>
<text x="1572" y="676.400" font-size="21" fill="#111" textLength="206.300" lengthAdjust="spacingAndGlyphs">Contact.phoneNumber</text>
<path d="M1833 667.500H1843L1838 672.800Z" fill="#111"/>
<rect x="1492.700" y="703" width="146.300" height="42.500" rx="4" fill="#fff4f5" stroke="#ff5864" stroke-width="1.500"/>
<text x="1503.300" y="730" font-size="21" fill="#a2a5ae" textLength="77.700" lengthAdjust="spacingAndGlyphs">Operator</text>
<path d="M1611.300 721.500H1621.300L1616.300 726.500Z" fill="#a2a5ae"/>
<rect x="1650" y="703" width="210.700" height="42.500" rx="4" fill="#fff4f5" stroke="#ff5864" stroke-width="1.500"/>
<text x="1661" y="730" font-size="21" fill="#111" textLength="113.300" lengthAdjust="spacingAndGlyphs">5614589686</text>
<text x="1492.700" y="774.500" font-size="16.500" fill="#ff2a35" stroke="#ff2a35" stroke-width=".25" textLength="163.600" lengthAdjust="spacingAndGlyphs">Required Fields Missing</text>
</svg>
</body></html>
